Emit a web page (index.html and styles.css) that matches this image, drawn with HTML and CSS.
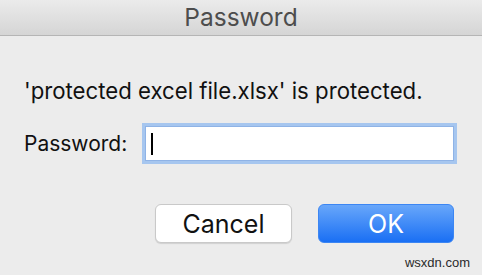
FILE: index.html
```html
<!DOCTYPE html>
<html>
<head>
<meta charset="utf-8">
<link rel="stylesheet" href="styles.css">
</head>
<body>
<div class="dialog">
  <div class="titlebar">Password</div>
  <div class="content">
    <p class="message">'protected excel file.xlsx' is protected.</p>
    <div class="field-row">
      <label class="label">Password:</label>
      <div class="input"><span class="caret"></span></div>
    </div>
    <div class="buttons">
      <button class="btn btn-cancel">Cancel</button>
      <button class="btn btn-ok">OK</button>
    </div>
  </div>
  <div class="watermark">wsxdn.com</div>
</div>
</body>
</html>
```
FILE: styles.css
```css
html, body {
  margin: 0;
  padding: 0;
  width: 482px;
  height: 275px;
  overflow: hidden;
  background: #ececec;
  font-family: Inter, "Liberation Sans", sans-serif;
}
.dialog {
  position: relative;
  width: 482px;
  height: 275px;
}
.titlebar {
  height: 35px;
  border-bottom: 1px solid #b5b5b5;
  background: linear-gradient(#ebebeb, #d5d5d5);
  color: #4d4d4d;
  font-size: 24.5px;
  line-height: 35px;
  text-align: center;
}
.content {
  padding: 0 24px;
  display: flex;
  flex-direction: column;
}
.message {
  margin: 42px 0 0 0;
  font-size: 22.2px;
  line-height: 26px;
  color: #111;
}
.field-row {
  display: flex;
  align-items: center;
  margin-top: 19px;
  height: 41px;
}
.label {
  width: 118px;
  font-size: 21px;
  color: #111;
}
.input {
  box-sizing: border-box;
  width: 315px;
  height: 41px;
  border: 3px solid #a6c6ef;
  background: #fff;
  box-shadow: inset 0 0 0 1px #8fb3e6;
  display: flex;
  align-items: center;
  padding-left: 6px;
}
.caret {
  width: 2px;
  height: 22px;
  background: #000;
}
.buttons {
  display: flex;
  justify-content: flex-end;
  gap: 26px;
  margin-top: 40px;
  padding-right: 4px;
}
.btn {
  box-sizing: border-box;
  height: 39px;
  border-radius: 6px;
  font-family: Inter, "Liberation Sans", sans-serif;
  font-size: 25px;
  padding: 0;
}
.btn-cancel {
  width: 137px;
  background: #fff;
  color: #111;
  border: 1px solid #c9c9c9;
  box-shadow: 0 1px 1px rgba(0,0,0,0.12);
}
.btn-ok {
  width: 136px;
  background: linear-gradient(#68a7fa, #1a6ff4);
  color: #fff;
  border: 1px solid #3c86f3;
}
.watermark {
  position: absolute;
  right: 12px;
  bottom: 5px;
  font-family: "Liberation Sans", sans-serif;
  font-size: 13px;
  color: #2a2a2a;
}
```
